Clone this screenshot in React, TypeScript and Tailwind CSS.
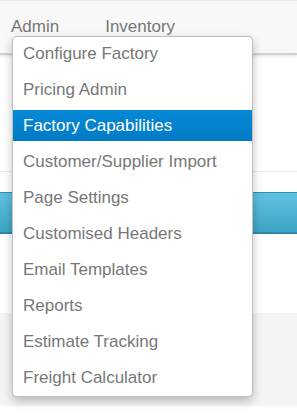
import React from "react";

const items = [
  "Configure Factory",
  "Pricing Admin",
  "Factory Capabilities",
  "Customer/Supplier Import",
  "Page Settings",
  "Customised Headers",
  "Email Templates",
  "Reports",
  "Estimate Tracking",
  "Freight Calculator",
];

export default function App() {
  return (
    <div
      className="relative w-[297px] h-[413px] overflow-hidden bg-white"
      style={{ fontFamily: '"Liberation Sans", Arial, sans-serif' }}
    >
      {/* nav bar */}
      <div className="h-[55px] bg-[#f8f8f8] border-t border-t-[#e8e8e8] border-b-[2px] border-b-[#d2d2d2] shadow-[0_1px_3px_rgba(0,0,0,0.12)] flex items-start pt-[13px] pl-[11px] gap-[46px] text-[17px] text-[#777]">
        <span>Admin</span>
        <span>Inventory</span>
      </div>
      {/* body */}
      <div className="h-[117px] border-b border-b-[#ececec]" />
      <div className="h-[20px]" />
      <div className="h-[42px] border-t border-t-[#2f8fae] border-b-[2px] border-b-[#2a8aa8] bg-gradient-to-b from-[#5ec1df] to-[#3da5c4]" />
      <div className="h-[79px]" />
      <div className="h-[93px] bg-[#f4f4f4]" />

      {/* dropdown */}
      <div className="absolute left-[12px] top-[36px] w-[241px] h-[361px] bg-white border border-[rgba(0,0,0,0.25)] rounded-[5px] shadow-[0_4px_10px_rgba(0,0,0,0.25)] pt-[1px] pb-[3px] flex flex-col gap-[5px]">
        {items.map((t, i) => (
          <div
            key={t}
            className={
              i === 2
                ? "h-[31px] flex items-center pl-[10px] text-[17px] text-white bg-gradient-to-b from-[#0789d6] to-[#007bc4]"
                : "h-[31px] flex items-center pl-[10px] text-[17px] text-[#777]"
            }
          >
            {t}
          </div>
        ))}
      </div>
    </div>
  );
}
